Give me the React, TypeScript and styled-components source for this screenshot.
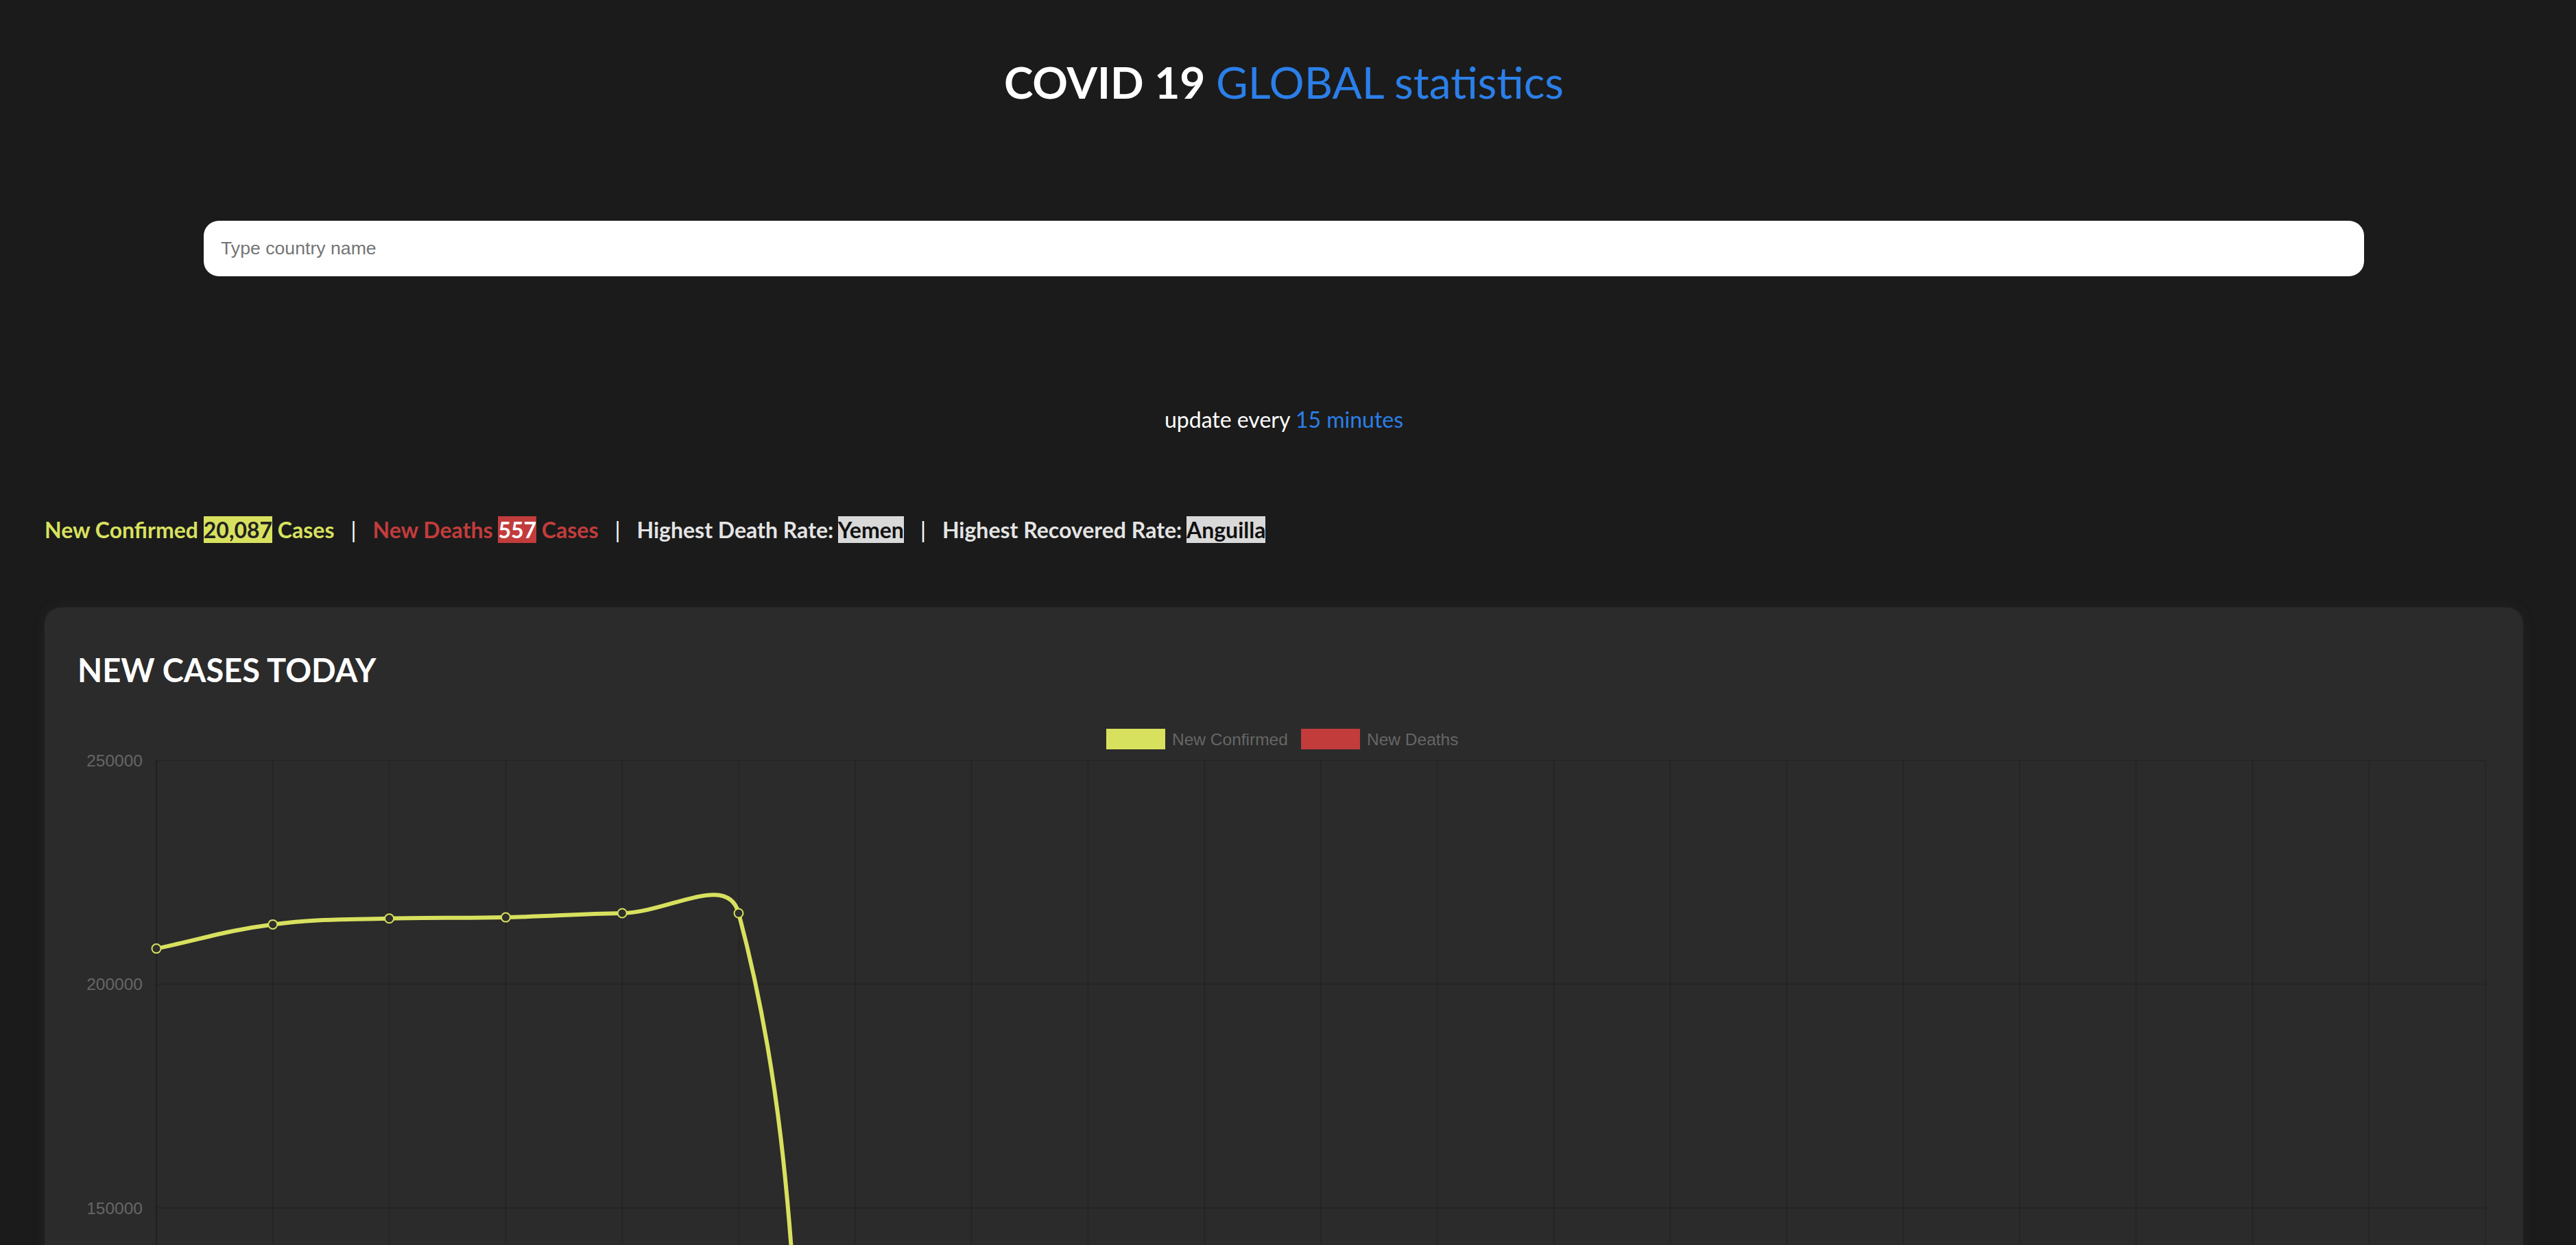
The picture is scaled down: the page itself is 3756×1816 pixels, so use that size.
import React from "react";
import styled, { createGlobalStyle } from "styled-components";

const YELLOW = "#d8e15e";
const RED = "#c23c3c";
const BLUE = "#2b7fe9";

const GlobalStyle = createGlobalStyle`
  html, body {
    margin: 0;
    padding: 0;
    background: #1b1b1b;
    overflow: hidden;
  }
  body {
    font-family: Lato, "Noto Sans", sans-serif;
    color: #ffffff;
  }
`;

const Page = styled.div`
  width: 3744px;
  height: 1816px;
  overflow: hidden;
  display: flex;
  flex-direction: column;
  align-items: stretch;
  background: #1b1b1b;

  & > * {
    flex-shrink: 0;
  }
`;

const Title = styled.h1`
  margin: 81px 0 0;
  text-align: center;
  font-family: Lato, sans-serif;
  font-size: 64px;
  line-height: 78px;
  font-weight: 700;
  color: #ffffff;
`;

const Accent = styled.span<{ $weight?: number }>`
  color: ${BLUE};
  font-weight: ${(p) => p.$weight ?? 400};
`;

const Search = styled.input`
  margin: 163px 297px 0;
  height: 81px;
  box-sizing: border-box;
  border: none;
  border-radius: 22px;
  padding: 0 25px;
  font-family: "Liberation Sans", Arial, sans-serif;
  font-size: 26.67px;
  color: #333333;
  background: #ffffff;
  outline: none;
  &::placeholder {
    color: #757575;
  }
`;

const UpdateNote = styled.p`
  margin: 190px 0 0;
  text-align: center;
  font-family: Lato, sans-serif;
  font-size: 32px;
  line-height: 38px;
  font-weight: 400;
  color: #ffffff;
`;

const StatsLine = styled.div`
  margin: 123px 0 0;
  padding-left: 65px;
  display: flex;
  align-items: baseline;
  font-family: Lato, sans-serif;
  font-size: 32px;
  line-height: 38px;
  font-weight: 700;
  white-space: pre;
`;

type Tone = "yellow" | "red" | "light";

const toneText: Record<Tone, string> = {
  yellow: YELLOW,
  red: RED,
  light: "#e4e4e4",
};
const toneBadgeBg: Record<Tone, string> = {
  yellow: YELLOW,
  red: RED,
  light: "#d9d9d9",
};
const toneBadgeText: Record<Tone, string> = {
  yellow: "#222222",
  red: "#ffffff",
  light: "#111111",
};

const Stat = styled.span<{ $tone: Tone }>`
  color: ${(p) => toneText[p.$tone]};
`;

const Badge = styled.span<{ $tone: Tone }>`
  background: ${(p) => toneBadgeBg[p.$tone]};
  color: ${(p) => toneBadgeText[p.$tone]};
`;

const Sep = styled.span`
  margin: 0 24px;
  color: #ffffff;
  font-weight: 400;
`;

const Card = styled.section`
  margin: 94px 65px 0;
  padding: 62px 48px 40px;
  background: #2b2b2b;
  border-radius: 24px;
  box-shadow: 0 0 18px rgba(70, 70, 70, 0.18);
`;

const CardTitle = styled.h2`
  margin: 0;
  font-family: Lato, sans-serif;
  font-size: 47px;
  line-height: 58px;
  font-weight: 700;
  color: #ffffff;
`;

const ChartSvg = styled.svg`
  display: block;
  margin-top: 34px;
  font-family: "Liberation Sans", Arial, sans-serif;
`;

/* ---------- chart ---------- */

const CH_W = 3518;
const CH_H = 1760;
const AREA = { left: 115, right: 3511, top: 69, bottom: 1701.5 };
const MAX = 250000;

const confirmed = [
  207948, 213338, 214655, 214916, 215850, 215850, 20087, 0, 0, 0, 0, 0, 0, 0, 0,
  0, 0, 0, 0, 0, 0,
];
const deaths = [
  4810, 5120, 5230, 5010, 4930, 5290, 557, 0, 0, 0, 0, 0, 0, 0, 0, 0, 0, 0, 0, 0,
  0,
];

type Pt = { x: number; y: number };

const xAt = (i: number) =>
  AREA.left + ((AREA.right - AREA.left) / (confirmed.length - 1)) * i;
const yAt = (v: number) =>
  AREA.top + ((MAX - v) / MAX) * (AREA.bottom - AREA.top);

const cap = (p: Pt): Pt => ({
  x: Math.min(Math.max(p.x, AREA.left), AREA.right),
  y: Math.min(Math.max(p.y, AREA.top), AREA.bottom),
});

function splinePath(values: number[], tension = 0.4): { d: string; pts: Pt[] } {
  const pts = values.map((v, i) => ({ x: xAt(i), y: yAt(v) }));
  const ctrl = pts.map((p, i) => {
    const prev = pts[i - 1] ?? p;
    const next = pts[i + 1] ?? p;
    const d01 = Math.hypot(p.x - prev.x, p.y - prev.y);
    const d12 = Math.hypot(next.x - p.x, next.y - p.y);
    let s01 = d01 / (d01 + d12);
    let s12 = d12 / (d01 + d12);
    if (!isFinite(s01)) s01 = 0;
    if (!isFinite(s12)) s12 = 0;
    const fa = tension * s01;
    const fb = tension * s12;
    return {
      prev: cap({ x: p.x - fa * (next.x - prev.x), y: p.y - fa * (next.y - prev.y) }),
      next: cap({ x: p.x + fb * (next.x - prev.x), y: p.y + fb * (next.y - prev.y) }),
    };
  });
  let d = `M ${pts[0].x} ${pts[0].y}`;
  for (let i = 1; i < pts.length; i++) {
    const a = ctrl[i - 1].next;
    const b = ctrl[i].prev;
    d += ` C ${a.x} ${a.y} ${b.x} ${b.y} ${pts[i].x} ${pts[i].y}`;
  }
  return { d, pts };
}

const yTicks = [250000, 200000, 150000, 100000, 50000, 0];

function NewCasesChart() {
  const conf = splinePath(confirmed);
  const dead = splinePath(deaths);
  return (
    <ChartSvg width={CH_W} height={CH_H} viewBox={`0 0 ${CH_W} ${CH_H}`}>
      {/* legend */}
      <rect x={1500} y={23} width={86} height={30} fill={YELLOW} />
      <text x={1596} y={38} fontSize={24.5} fill="#666" dominantBaseline="central">
        New Confirmed
      </text>
      <rect x={1784} y={23} width={86} height={30} fill={RED} />
      <text x={1880} y={38} fontSize={24.5} fill="#666" dominantBaseline="central">
        New Deaths
      </text>

      {/* horizontal grid + y labels */}
      {yTicks.map((t) => (
        <g key={t}>
          <line
            x1={AREA.left}
            x2={AREA.right}
            y1={yAt(t)}
            y2={yAt(t)}
            stroke="rgba(0,0,0,0.12)"
            strokeWidth={2}
          />
          <text
            x={95}
            y={yAt(t)}
            fontSize={24.5}
            fill="#666"
            textAnchor="end"
            dominantBaseline="central"
          >
            {t}
          </text>
        </g>
      ))}

      {/* vertical grid */}
      {confirmed.map((_, i) => (
        <line
          key={`g${i}`}
          x1={xAt(i)}
          x2={xAt(i)}
          y1={AREA.top}
          y2={AREA.bottom + 20}
          stroke={i === 0 ? "rgba(0,0,0,0.25)" : "rgba(0,0,0,0.12)"}
          strokeWidth={2}
        />
      ))}

      {/* lines */}
      <path d={dead.d} fill="none" stroke={RED} strokeWidth={6} />
      <path d={conf.d} fill="none" stroke={YELLOW} strokeWidth={6} />

      {dead.pts.map((p, i) => (
        <circle key={`d${i}`} cx={p.x} cy={p.y} r={6.5} fill="#2e2b2b" stroke={RED} strokeWidth={2} />
      ))}
      {conf.pts.map((p, i) => (
        <circle key={`c${i}`} cx={p.x} cy={p.y} r={6.5} fill="#2f2f2b" stroke={YELLOW} strokeWidth={2} />
      ))}
    </ChartSvg>
  );
}

export default function App() {
  return (
    <>
      <GlobalStyle />
      <Page>
        <Title>
          COVID 19 <Accent>GLOBAL statistics</Accent>
        </Title>
        <Search type="text" placeholder="Type country name" />
        <UpdateNote>
          update every <Accent>15 minutes</Accent>
        </UpdateNote>
        <StatsLine>
          <Stat $tone="yellow">
            New Confirmed <Badge $tone="yellow">20,087</Badge> Cases
          </Stat>
          <Sep>|</Sep>
          <Stat $tone="red">
            New Deaths <Badge $tone="red">557</Badge> Cases
          </Stat>
          <Sep>|</Sep>
          <Stat $tone="light">
            Highest Death Rate: <Badge $tone="light">Yemen</Badge>
          </Stat>
          <Sep>|</Sep>
          <Stat $tone="light">
            Highest Recovered Rate: <Badge $tone="light">Anguilla</Badge>
          </Stat>
        </StatsLine>
        <Card>
          <CardTitle>NEW CASES TODAY</CardTitle>
          <NewCasesChart />
        </Card>
      </Page>
    </>
  );
}
